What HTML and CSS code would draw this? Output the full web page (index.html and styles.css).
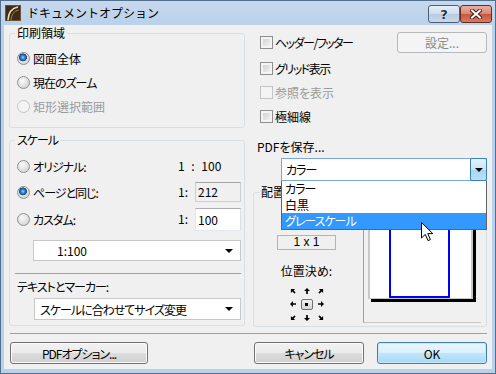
FILE: index.html
```html
<!DOCTYPE html>
<html>
<head>
  <meta charset="UTF-8">
  <title>ドキュメントオプション</title>
  <link rel="stylesheet" href="styles.css">
</head>
<body>

<div class="window">
  <div class="titlebar">
    <svg class="app-icon" width="16" height="16" viewBox="0 0 16 16">
      <rect x="0.5" y="0.5" width="15" height="15" fill="#3d2b19" stroke="#6b5234"/>
      <path d="M3 15 C3.5 8 7 3 13 2" stroke="#f0dcb4" stroke-width="1.6" fill="none"/>
      <path d="M6 15 C6.5 9.5 9 6 13.5 5" stroke="#a3825a" stroke-width="1" fill="none"/>
    </svg>
    <span class="title">ドキュメントオプション</span>
    <div class="caption-btns">
      <div class="cap-btn cap-help">?</div>
      <div class="cap-btn cap-close">
        <svg width="12" height="10" viewBox="0 0 12 10">
          <path d="M2 1.5 L10 8.5 M10 1.5 L2 8.5" stroke="#4a1a12" stroke-width="4" stroke-linecap="square"/>
          <path d="M2 1.5 L10 8.5 M10 1.5 L2 8.5" stroke="#fff" stroke-width="2" stroke-linecap="square"/>
        </svg>
      </div>
    </div>
  </div>

  <div class="client">
    <div class="columns">
      <div class="col-left">
        <fieldset class="group group-print">
          <legend>印刷領域</legend>
          <div class="opt"><span class="radio checked"></span>図面全体</div>
          <div class="opt kana"><span class="radio"></span>現在のズーム</div>
          <div class="opt disabled"><span class="radio"></span>矩形選択範囲</div>
        </fieldset>

        <fieldset class="group group-scale">
          <legend class="kana">スケール</legend>
          <div class="scale-rows">
            <div class="opt kana"><span class="radio"></span>オリジナル:</div>
            <div class="ratio-full">1 : 100</div>

            <div class="opt kana"><span class="radio checked"></span>ページと同じ:</div>
            <div class="ratio">1:</div>
            <div class="field field-off">212</div>

            <div class="opt kana"><span class="radio"></span>カスタム:</div>
            <div class="ratio">1:</div>
            <div class="field field-tall">100</div>
          </div>
          <div class="select select-scale"><span>1:100</span><i class="tri"></i></div>
          <hr class="line">
          <div class="label kana">テキストとマーカー:</div>
          <div class="select select-text"><span class="kana">スケールに合わせてサイズ変更</span><i class="tri"></i></div>
        </fieldset>
      </div>

      <div class="col-right">
        <div class="check-row first">
          <div class="opt kana-tight"><span class="check"></span>ヘッダー/フッター</div>
          <div class="btn btn-off">設定...</div>
        </div>
        <div class="check-row"><div class="opt kana-tight"><span class="check"></span>グリッド表示</div></div>
        <div class="check-row"><div class="opt disabled"><span class="check"></span>参照を表示</div></div>
        <div class="check-row"><div class="opt"><span class="check"></span>極細線</div></div>

        <div class="pdf-label">PDFを保存...</div>
        <div class="combo">
          <span class="combo-text kana">カラー</span>
          <div class="combo-btn"><i class="tri"></i></div>
          <ul class="combo-list">
            <li class="kana">カラー</li>
            <li>白黒</li>
            <li class="selected kana">グレースケール</li>
          </ul>
          <svg class="cursor" width="13" height="20" viewBox="0 0 13 20">
            <path d="M0.5 0.5 V16 L4.3 12.4 L7 18.6 L9.4 17.6 L6.8 11.6 L11.8 11.6 Z" fill="#fff" stroke="#000" stroke-width="1" stroke-linejoin="miter"/>
          </svg>
        </div>

        <fieldset class="group group-place">
          <legend>配置</legend>
          <div class="place">
            <div class="place-left">
              <div class="tiles">1 x 1</div>
              <div class="label">位置決め:</div>
              <div class="anchor-grid">
                <svg class="arr a-nw" viewBox="0 0 7 7"><path d="M3.5 0 L7 3.5 H4.5 V7 H2.5 V3.5 H0 Z"/></svg>
                <svg class="arr a-n" viewBox="0 0 7 7"><path d="M3.5 0 L7 3.5 H4.5 V7 H2.5 V3.5 H0 Z"/></svg>
                <svg class="arr a-ne" viewBox="0 0 7 7"><path d="M3.5 0 L7 3.5 H4.5 V7 H2.5 V3.5 H0 Z"/></svg>
                <svg class="arr a-w" viewBox="0 0 7 7"><path d="M3.5 0 L7 3.5 H4.5 V7 H2.5 V3.5 H0 Z"/></svg>
                <div class="anchor-btn"><i></i></div>
                <svg class="arr a-e" viewBox="0 0 7 7"><path d="M3.5 0 L7 3.5 H4.5 V7 H2.5 V3.5 H0 Z"/></svg>
                <svg class="arr a-sw" viewBox="0 0 7 7"><path d="M3.5 0 L7 3.5 H4.5 V7 H2.5 V3.5 H0 Z"/></svg>
                <svg class="arr a-s" viewBox="0 0 7 7"><path d="M3.5 0 L7 3.5 H4.5 V7 H2.5 V3.5 H0 Z"/></svg>
                <svg class="arr a-se" viewBox="0 0 7 7"><path d="M3.5 0 L7 3.5 H4.5 V7 H2.5 V3.5 H0 Z"/></svg>
              </div>
            </div>
            <div class="preview">
              <div class="page">
                <div class="drawing"></div>
              </div>
            </div>
          </div>
        </fieldset>
      </div>
    </div>

    <hr class="line footer-line">

    <div class="footer">
      <div class="btn btn-pdf"><span class="kana">PDFオプション...</span></div>
      <div class="btn btn-cancel"><span class="kana">キャンセル</span></div>
      <div class="btn btn-ok">OK</div>
    </div>
  </div>
</div>

</body>
</html>
```

FILE: styles.css
```css
* {
  box-sizing: border-box;
}
body {
  margin: 0;
  font-family: "Noto Sans CJK JP", sans-serif;
  font-size: 12px;
  color: #000;
  font-feature-settings: "palt";
}
.kana {
  letter-spacing: -1px;
}
.kana-tight {
  letter-spacing: -1.5px;
}
.window {
  width: 496px;
  height: 374px;
  background: linear-gradient(#c6d8ee, #b9d1ea 25px);
  border: 1px solid #54708f;
  padding: 0 3px 4px;
  display: flex;
  flex-direction: column;
}

/* title bar */
.titlebar {
  height: 24px;
  display: flex;
  align-items: flex-start;
  flex-shrink: 0;
}
.app-icon {
  margin: 4px 6px 0 1px;
  flex-shrink: 0;
}
.title {
  line-height: 24px;
  font-feature-settings: normal;
}
.caption-btns {
  margin-left: auto;
  margin-top: 4px;
  display: flex;
}
.cap-btn {
  width: 32px;
  height: 18px;
  border: 1px solid #4c5e78;
  border-radius: 3px;
  display: flex;
  align-items: center;
  justify-content: center;
}
.cap-help {
  background: linear-gradient(#e6eef8, #cfdcec 50%, #b8cbe2 50%, #c8d8ec);
  font-family: "DejaVu Sans", sans-serif;
  font-weight: bold;
  font-size: 13px;
  color: #22324a;
  text-shadow: 0 0 1px #fff, 0 0 1px #fff;
}
.cap-close {
  background: linear-gradient(#eab0a2, #d98573 50%, #c65640 50%, #d77a62);
  border-color: #6b2a20;
}

/* client area */
.client {
  flex: 1;
  background: #f0f0f0;
  display: flex;
  flex-direction: column;
  padding: 0 5px;
}
.columns {
  display: flex;
  gap: 8px;
}
.col-left {
  width: 236px;
}
.col-right {
  width: 234px;
}

/* group boxes */
.group {
  margin: 0;
  border: 1px solid #d5dfe5;
  border-radius: 3px;
  padding: 0 3px 0 7px;
}
.group legend {
  padding: 0 2px;
  margin-left: -2px;
  line-height: 14px;
}
.group-print {
  margin-top: 1px;
  padding-top: 6px;
  padding-bottom: 9px;
}
.group-scale {
  margin-top: 5px;
  padding-top: 7px;
  padding-bottom: 5px;
}

/* radio / checkbox rows */
.opt {
  display: flex;
  align-items: center;
  height: 24px;
  white-space: nowrap;
}
.opt.disabled {
  color: #9a9a9a;
}
.radio {
  width: 13px;
  height: 13px;
  border-radius: 50%;
  border: 1px solid #8e8f8f;
  background: radial-gradient(circle at 40% 35%, #fafafa, #d8d8d8 70%);
  margin-right: 3px;
  flex-shrink: 0;
}
.radio.checked {
  background:
    radial-gradient(circle at 45% 40%, #a8dcf8 0, #3b8fd6 1.6px, #145aa4 3.2px, #2c4f74 3.8px, transparent 4.2px),
    radial-gradient(circle at 40% 35%, #fafafa, #d8d8d8 70%);
}
.disabled .radio {
  border-color: #c4c4c4;
  background: #f4f4f4;
}
.check {
  width: 13px;
  height: 13px;
  border: 1px solid #8e8f8f;
  background: linear-gradient(135deg, #cbcbcb, #f7f7f7);
  box-shadow: inset 0 0 0 2px #f4f4f4;
  margin-right: 2px;
  flex-shrink: 0;
}
.disabled .check {
  border-color: #c4c4c4;
  background: #f4f4f4;
  box-shadow: none;
}

/* scale grid */
.scale-rows {
  display: grid;
  grid-template-columns: 1fr 17px 46px;
  grid-template-rows: 24px 24px 26px;
  row-gap: 2px;
  align-items: center;
}
.ratio-full {
  grid-column: 2 / 4;
  line-height: 14px;
  word-spacing: 4px;
}
.ratio {
  line-height: 14px;
}
.field {
  height: 20px;
  line-height: 18px;
  padding-left: 2px;
  border: 1px solid;
  border-color: #abadb3 #dbdfe6 #e3e9ef #e2e3ea;
  background: #fff;
}
.field-off {
  background: #f0f0f0;
  border-color: #a5a5a5 #cfcfcf #cfcfcf #cfcfcf;
}
.field-tall {
  height: 23px;
  line-height: 21px;
}

/* dropdowns */
.select {
  display: flex;
  align-items: center;
  height: 21px;
  border: 1px solid #c8c8c8;
  background: #fff;
  padding: 0 7px 0 5px;
}
.select span {
  flex: 1;
}
.tri {
  width: 0;
  height: 0;
  border-left: 4px solid transparent;
  border-right: 4px solid transparent;
  border-top: 4px solid #000;
}
.select-scale {
  margin: 8px 0 0 16px;
  padding-left: 23px;
}
.select-text {
  margin: 4px 0 0 17px;
  height: 22px;
}
.line {
  border: 0;
  border-top: 1px solid #a0a0a0;
  height: 0;
  margin: 12px 0 0 -2px;
}
.group-scale .line {
  margin-bottom: 6px;
}
.label {
  line-height: 14px;
}

/* right column */
.check-row {
  display: flex;
  align-items: center;
  justify-content: space-between;
  padding-left: 7px;
}
.check-row.first {
  margin-top: 7px;
  height: 21px;
  margin-bottom: 3px;
}
.btn {
  display: flex;
  align-items: center;
  justify-content: center;
  height: 22px;
  border: 1px solid #707070;
  border-radius: 3px;
  background: linear-gradient(#f2f2f2, #ebebeb 50%, #dddddd 50%, #cfcfcf);
  box-shadow: inset 0 0 0 1px #fbfbfb;
  white-space: nowrap;
}
.btn-off {
  width: 90px;
  height: 21px;
  border-color: #b5b9bc;
  background: #f4f4f4;
  box-shadow: none;
  color: #8a8a8a;
}
.pdf-label {
  margin: 12px 0 0 4px;
  line-height: 14px;
}

/* open combo box */
.combo {
  position: relative;
  display: flex;
  height: 23px;
  margin: 4px 0 0 28px;
  border: 1px solid #7aa7d6;
  background: #fff;
}
.combo-text {
  flex: 1;
  padding-left: 4px;
  line-height: 21px;
}
.combo-btn {
  width: 17px;
  border: 1px solid #3c7fb1;
  border-radius: 2px;
  background: linear-gradient(#e4f4fd, #c4e6fa 50%, #a6d6f3 50%, #b8e0f7);
  display: flex;
  align-items: center;
  justify-content: center;
  margin: -1px -1px -1px 0;
}
.combo-list {
  position: absolute;
  left: -1px;
  right: -1px;
  top: 100%;
  margin: 1px 0 0;
  padding: 0;
  list-style: none;
  background: #fff;
  border: 1px solid #646464;
  border-top: 0;
  z-index: 5;
}
.combo-list li {
  height: 16px;
  line-height: 16px;
  padding-left: 3px;
}
.combo-list li.selected {
  background: #3399ff;
  color: #fff;
}
.cursor {
  position: absolute;
  left: 139px;
  top: 63px;
  z-index: 6;
}

/* placement group */
.group-place {
  margin-top: 4px;
  padding: 0 5px 0 0;
}
.group-place legend {
  margin-left: 5px;
}
.place {
  display: flex;
  height: 127px;
}
.place-left {
  width: 109px;
  padding-right: 4px;
  display: flex;
  flex-direction: column;
  align-items: center;
}
.tiles {
  margin-top: 36px;
  width: 59px;
  height: 15px;
  line-height: 13px;
  text-align: center;
  border: 1px solid #b4b4b4;
  background: #f0f0f0;
  font-family: "Liberation Sans", sans-serif;
}
.place-left .label {
  margin-top: 14px;
}
.anchor-grid {
  margin-top: 6px;
  display: grid;
  grid-template-columns: 14px 14px 14px;
  grid-template-rows: 13px 14px 13px;
  place-items: center;
}
.arr {
  width: 6px;
  height: 6px;
}
.a-ne { transform: rotate(45deg); }
.a-e { transform: rotate(90deg); }
.a-se { transform: rotate(135deg); }
.a-s { transform: rotate(180deg); }
.a-sw { transform: rotate(225deg); }
.a-w { transform: rotate(270deg); }
.a-nw { transform: rotate(315deg); }
.anchor-btn {
  width: 12px;
  height: 11px;
  border: 1px solid #707070;
  border-radius: 2px;
  background: linear-gradient(#f2f2f2, #d4d4d4);
  display: flex;
  align-items: center;
  justify-content: center;
}
.anchor-btn i {
  width: 3px;
  height: 3px;
  background: #000;
}
.preview {
  width: 118px;
  height: 124px;
  border-left: 1px solid #a0a0a0;
  border-bottom: 1px solid #c8c8c8;
  padding: 4px 0 0 4px;
}
.page {
  width: 105px;
  height: 96px;
  background: #fff;
  border: 2px solid #c8c8c8;
  border-bottom-width: 1px;
  box-shadow: 3px 3px 0 #000;
  display: flex;
  align-items: flex-end;
  padding-left: 19px;
}
.drawing {
  width: 61px;
  height: 84px;
  border: 2px solid #0000ff;
}

/* footer */
.footer-line {
  margin: 6px 0 0 1px;
}
.footer {
  display: flex;
  margin: 8px 0 0 1px;
  gap: 13px;
}
.btn-pdf {
  width: 138px;
  margin-right: auto;
}
.btn-cancel {
  width: 110px;
}
.btn-ok {
  width: 110px;
  border-color: #3c7fb1;
  background: linear-gradient(#eaf6fd, #d9f0fc 50%, #bee6fd 50%, #a7d9f5);
  box-shadow: inset 0 0 0 1px #c6e8fb;
}
```
